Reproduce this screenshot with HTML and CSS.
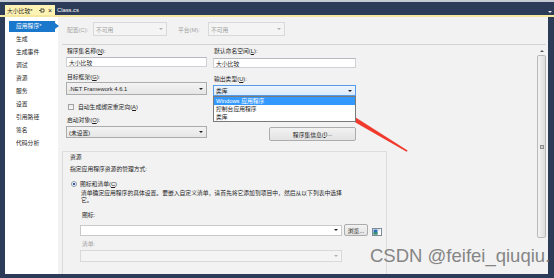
FILE: index.html
```html
<!DOCTYPE html>
<html lang="zh-CN">
<head>
  <meta charset="UTF-8">
  <title>大小比较 - 项目属性</title>
  <link rel="stylesheet" href="styles.css">
</head>
<body>
  <div class="window">
    <div class="tabbar">
      <div class="tab active">
        <span class="tab-name">大小比较*</span>
        <svg class="pin" width="6" height="5" viewBox="0 0 6 5"><path d="M0 2.5h2M2 0.5v4M2 1h3v3h-3" fill="none" stroke="#333" stroke-width="0.8"/></svg>
        <span class="close">×</span>
      </div>
      <div class="tab">Class.cs</div>
      <span class="tablist"></span>
    </div>

    <div class="main">
      <ul class="nav">
        <li class="on">应用程序*</li>
        <li>生成</li>
        <li>生成事件</li>
        <li>调试</li>
        <li>资源</li>
        <li>服务</li>
        <li>设置</li>
        <li>引用路径</li>
        <li>签名</li>
        <li>代码分析</li>
      </ul>

      <div class="page">
        <div class="config">
          <span class="cfg-label">配置(C):</span>
          <div class="sel off cfg-sel"><span>不可用</span><span class="arr"></span></div>
          <span class="cfg-label plat">平台(M):</span>
          <div class="sel off plat-sel"><span>不可用</span><span class="arr"></span></div>
        </div>
        <div class="hr"></div>

        <div class="lower">
          <div class="form">
            <div class="cols">
              <div class="col col-left">
                <div class="lbl l1">程序集名称(<u>N</u>):</div>
                <div class="txt t1">大小比较</div>
                <div class="lbl l2">目标框架(<u>G</u>):</div>
                <div class="sel s-framework"><span>.NET Framework 4.6.1</span><span class="arr"></span></div>
                <div class="check-row"><span class="checkbox"></span>自动生成绑定重定向(<u>A</u>)</div>
                <div class="lbl l3">启动对象(<u>O</u>):</div>
                <div class="sel s-start"><span>(未设置)</span><span class="arr"></span></div>
              </div>
              <div class="col col-right">
                <div class="lbl l1">默认命名空间(<u>L</u>):</div>
                <div class="txt t2">大小比较</div>
                <div class="lbl r2">输出类型(<u>U</u>):</div>
                <div class="combo">
                  <div class="sel focus s-output"><span>类库</span><span class="arr"></span></div>
                  <ul class="dropdown">
                    <li class="hl">Windows 应用程序</li>
                    <li>控制台应用程序</li>
                    <li>类库</li>
                  </ul>
                </div>
                <div class="btn info-btn">程序集信息(<u>I</u>)...</div>
              </div>
            </div>

            <div class="group">
              <div class="g-title">资源</div>
              <div class="g-desc">指定应用程序资源的管理方式:</div>
              <div class="radio-row"><span class="radio"></span>图标和清单(<u>C</u>)</div>
              <div class="g-note">清单确定应用程序的具体设置。要嵌入自定义清单，请首先将它添加到项目中，然后从以下列表中选择<br>它。</div>
              <div class="g-label">图标:</div>
              <div class="icon-row">
                <div class="sel white icon-sel"><span></span><span class="arr"></span></div>
                <div class="btn browse">浏览...</div>
                <svg class="pic" width="10" height="8" viewBox="0 0 10 8">
                  <rect x="0.5" y="0.5" width="9" height="7" fill="#fff" stroke="#7d8b99"/>
                  <rect x="1.5" y="1.5" width="4" height="5" fill="#2f6fb8"/>
                  <rect x="1.5" y="4.5" width="4" height="2" fill="#3a9a5a"/>
                  <rect x="6.5" y="1.5" width="1" height="1" fill="#6aa3d8"/>
                </svg>
              </div>
              <div class="g-label off">清单:</div>
              <div class="sel off manifest-sel"><span></span><span class="arr"></span></div>
            </div>
          </div>

          <div class="scrollbar">
            <div class="sb-up"></div>
            <div class="sb-thumb"><span class="grip"></span></div>
          </div>
        </div>
      </div>
    </div>

    <svg class="annot" width="554" height="278" viewBox="0 0 554 278">
      <polygon points="338.0,112.5 340.8,108.1 407.6,150.4 406.6,151.8" fill="#f03a2e"/>
      <polygon points="324,101 343.0,104.3 335.8,116.2" fill="#f03a2e"/>
    </svg>
    <div class="watermark">CSDN @feifei_qiuqiu.</div>
  </div>
</body>
</html>
```

FILE: styles.css
```css
* {
  box-sizing: border-box;
}

body {
  margin: 0;
  background-color: #2b3b58;
  font-family: "Liberation Sans", "Noto Sans CJK SC", sans-serif;
  font-size: 5.8px;
  color: #1e1e1e;
}

u {
  text-decoration: underline;
}

.window {
  position: relative;
  width: 554px;
  height: 278px;
  background-color: #2b3b58;
  overflow: hidden;
}

/* tab strip */
.tabbar {
  position: relative;
  height: 17px;
  border-top: 2px solid #c4cad4;
  border-bottom: 2px solid #f6e7a0;
  display: flex;
  align-items: flex-end;
  gap: 2px;
  padding-left: 5px;
}

.tab {
  height: 10px;
  display: flex;
  align-items: center;
  padding: 0 3px 0 0;
  color: #fff;
}

.tab.active {
  width: 50px;
  padding-left: 2px;
  background-color: #fdf3b5;
  color: #1e1e1e;
}

.tab-name {
  flex: 1;
}

.pin {
  margin-right: 3px;
}

.close {
  font-size: 7px;
  line-height: 7px;
}

.tablist {
  position: absolute;
  right: 2px;
  top: 9px;
  width: 0;
  height: 0;
  border-left: 2px solid transparent;
  border-right: 2px solid transparent;
  border-top: 2px solid #e8ecf2;
}

/* body */
.main {
  display: flex;
  height: 257px;
  margin: 0 6px 0 5px;
}

.nav {
  width: 53px;
  margin: 0;
  padding: 4px 0 0;
  list-style: none;
  background-color: #fff;
}

.nav li {
  height: 11px;
  line-height: 11px;
  margin-bottom: 2px;
  padding-left: 11px;
}

.nav li.on {
  position: relative;
  margin: 0 3px 2px 4px;
  padding-left: 7px;
  background-color: #1a78cc;
  color: #fff;
}

.nav li.on::after {
  content: "";
  position: absolute;
  right: -4px;
  top: 2px;
  border-top: 3.5px solid transparent;
  border-bottom: 3.5px solid transparent;
  border-left: 4px solid #1a78cc;
}

.page {
  flex: 1;
  display: flex;
  flex-direction: column;
  padding: 5px 2px 0 4px;
  background-color: #f2f2f2;
}

.config {
  display: flex;
  align-items: center;
  height: 14px;
  padding-left: 5px;
}

.cfg-label {
  width: 26px;
  color: #a2a2a2;
}

.cfg-label.plat {
  width: 30px;
  margin-left: 11px;
}

.cfg-sel {
  width: 74px;
  height: 14px;
}

.plat-sel {
  width: 77px;
  height: 14px;
}

.hr {
  margin-top: 8px;
  border-top: 1px solid #d2d2d2;
}

.lower {
  display: flex;
  flex: 1;
}

.form {
  flex: 1;
}

.cols {
  display: flex;
  gap: 6px;
  height: 96px;
  padding-left: 4px;
}

.col {
  display: flex;
  flex-direction: column;
}

.col-left {
  width: 141px;
}

.col-right {
  width: 143px;
}

.lbl {
  height: 9px;
  line-height: 9px;
  padding-left: 1px;
}

.l1 {
  margin-top: 2px;
}

.l2 {
  margin-top: 6px;
}

.l3 {
  margin-top: 5px;
}

.r2 {
  margin-top: 7px;
}

.txt {
  height: 10px;
  display: flex;
  align-items: center;
  padding-left: 2px;
  border: 1px solid #cfd1d6;
  border-top-color: #b5b8be;
  background-color: #fff;
}

.t1 {
  margin-top: 1px;
}

.t2 {
  margin-top: 2px;
}

.sel {
  display: flex;
  align-items: center;
  justify-content: space-between;
  padding: 0 3px 0 2px;
  border: 1px solid #acacac;
  background: linear-gradient(#f3f3f3, #e6e6e6);
}

.sel .arr {
  width: 0;
  height: 0;
  border-left: 2px solid transparent;
  border-right: 2px solid transparent;
  border-top: 2px solid #222;
}

.sel.off {
  border-color: #d9d9d9;
  background: #f4f4f4;
  color: #a0a0a0;
}

.sel.off .arr {
  border-top-color: #b0b0b0;
}

.sel.white {
  border-color: #c9c9c9;
  background: #fff;
}

.sel.focus {
  border-color: #569de5;
  background: linear-gradient(#eef5fc, #dcebfb);
}

.s-framework {
  height: 13px;
}

.s-start {
  height: 12px;
  margin-top: 1px;
}

.check-row {
  display: flex;
  align-items: center;
  height: 9px;
  margin-top: 7px;
  padding-left: 2px;
}

.checkbox {
  width: 6px;
  height: 6px;
  margin-right: 4px;
  border: 1px solid #a3a3a3;
  background: linear-gradient(#e8e8e8, #fafafa);
}

.combo {
  position: relative;
  margin-top: 1px;
}

.s-output {
  height: 11px;
}

.dropdown {
  position: absolute;
  left: 0;
  top: 100%;
  width: 143px;
  margin: 0;
  padding: 0;
  list-style: none;
  border: 1px solid #7a7a7a;
  background-color: #fff;
  z-index: 2;
}

.dropdown li {
  height: 8px;
  line-height: 8px;
  padding-left: 2px;
}

.dropdown li.hl {
  background-color: #3399ff;
  color: #fff;
}

.btn {
  display: flex;
  align-items: center;
  justify-content: center;
  border: 1px solid #acacac;
  border-radius: 2px;
  background: linear-gradient(#f2f2f2, #e3e3e3);
}

.info-btn {
  align-self: flex-end;
  width: 87px;
  height: 14px;
  margin-top: 31px;
}

/* resources group */
.group {
  width: 325px;
  height: 123px;
  margin-top: 10px;
  padding-left: 7px;
  border: 1px solid #dddddd;
  border-bottom: none;
}

.g-title {
  height: 9px;
  line-height: 9px;
  margin-top: 1px;
}

.g-desc {
  height: 9px;
  line-height: 9px;
  margin-top: 3px;
}

.radio-row {
  display: flex;
  align-items: center;
  height: 9px;
  margin-top: 5px;
  padding-left: 1px;
}

.radio {
  width: 6px;
  height: 6px;
  margin-right: 3px;
  border: 1px solid #8e9aa8;
  border-radius: 50%;
  background: radial-gradient(circle, #2a5da8 0 1.2px, #fff 1.6px);
}

.g-note {
  margin-top: 2px;
  padding-left: 11px;
  line-height: 7px;
}

.g-label {
  height: 9px;
  line-height: 9px;
  margin-top: 7px;
  padding-left: 12px;
}

.g-label.off {
  margin-top: 4px;
  color: #a2a2a2;
}

.icon-row {
  display: flex;
  align-items: center;
  margin-top: 4px;
  padding-left: 10px;
}

.icon-sel {
  width: 262px;
  height: 11px;
}

.browse {
  width: 24px;
  height: 12px;
  margin-left: 2px;
}

.pic {
  margin-left: 4px;
  margin-top: 3px;
}

.manifest-sel {
  width: 262px;
  height: 12px;
  margin-top: 1px;
  margin-left: 10px;
}

/* vertical scroll bar */
.scrollbar {
  display: flex;
  flex-direction: column;
  width: 9px;
  height: 190px;
  margin-top: 3px;
}

.sb-up {
  position: relative;
  height: 7px;
}

.sb-up::after {
  content: "";
  position: absolute;
  left: 2.5px;
  top: 2px;
  border-left: 2px solid transparent;
  border-right: 2px solid transparent;
  border-bottom: 2px solid #555;
}

.sb-thumb {
  flex: 1;
  display: flex;
  align-items: center;
  justify-content: center;
  border: 1px solid #b9b9b9;
  border-radius: 2px;
  background: linear-gradient(to right, #f4f4f4, #dcdcdc);
}

.grip {
  width: 4px;
  height: 4px;
  border: 1px solid #8c8c8c;
  background-color: #d0d0d0;
}

/* overlays */
.annot {
  position: absolute;
  left: 0;
  top: 0;
  pointer-events: none;
}

.watermark {
  position: absolute;
  left: 370px;
  top: 247px;
  font-size: 18.5px;
  line-height: 18.5px;
  color: #858585;
  white-space: nowrap;
}
```
